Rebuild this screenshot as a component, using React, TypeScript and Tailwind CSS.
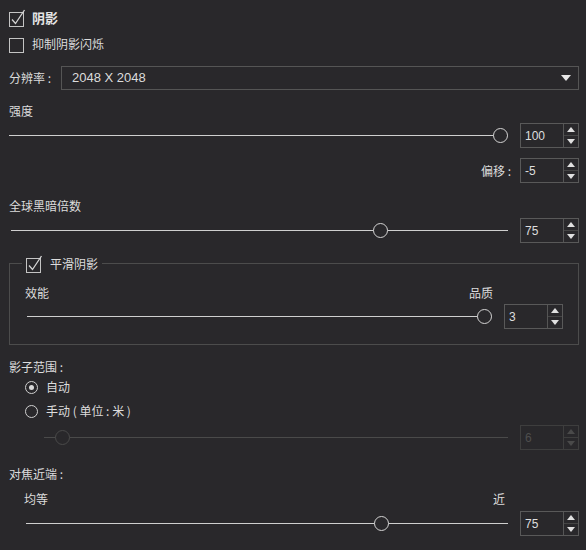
import React from 'react';

const cjk = "font-['Noto_Sans_CJK_SC','Noto_Sans',sans-serif]";
const num = "font-['Liberation_Sans',Arial,sans-serif]";

function CheckBox({ checked }: { checked: boolean }) {
  return (
    <svg width="17" height="18" viewBox="0 0 17 18" className="shrink-0">
      <rect x="0.5" y="3.5" width="14" height="14" fill="none" stroke="#c4c4c4" strokeWidth="1" />
      {checked && <path d="M3 10.5 L6.5 14.5 L15.5 1" fill="none" stroke="#d4d4d4" strokeWidth="1.3" />}
    </svg>
  );
}

function Radio({ checked }: { checked: boolean }) {
  return (
    <span className="relative flex h-[13px] w-[13px] shrink-0 items-center justify-center rounded-full border-[1.5px] border-[#d0d0d0]">
      {checked && <span className="h-[5px] w-[5px] rounded-full bg-[#d8d8d8]" />}
    </span>
  );
}

function Arrows({ dim }: { dim?: boolean }) {
  const c = dim ? '#4a4a4a' : '#e0e0e0';
  return (
    <div className={`flex w-[15px] flex-col border-l ${dim ? 'border-[#3e3e3e]' : 'border-[#555]'}`}>
      <div className={`flex flex-1 items-center justify-center border-b ${dim ? 'border-[#3e3e3e]' : 'border-[#454545]'}`}>
        <svg width="8" height="5" viewBox="0 0 8 5"><path d="M0 5 L4 0 L8 5Z" fill={c} /></svg>
      </div>
      <div className="flex flex-1 items-center justify-center">
        <svg width="8" height="5" viewBox="0 0 8 5"><path d="M0 0 L8 0 L4 5Z" fill={c} /></svg>
      </div>
    </div>
  );
}

function SpinBox({ value, dim }: { value: string; dim?: boolean }) {
  return (
    <div className={`flex h-[25px] w-[59px] shrink-0 border ${dim ? 'border-[#3e3e3e] text-[#4e4e4e]' : 'border-[#595959] text-[#dedede]'}`}>
      <div className={`flex flex-1 items-center pl-[4px] text-[12px] ${num}`}>{value}</div>
      <Arrows dim={dim} />
    </div>
  );
}

function Track({ pos, dim }: { pos: number; dim?: boolean }) {
  const line = dim ? 'bg-[#4a4a4a]' : 'bg-[#cfcfcf]';
  return (
    <div className="relative h-[16px] flex-1">
      <div className={`absolute left-0 right-0 top-[7px] h-[1.5px] ${line}`} />
      <div
        className={`absolute top-[0.5px] h-[15px] w-[15px] rounded-full border-[1.5px] bg-[#29282b] ${dim ? 'border-[#4a4a4a]' : 'border-[#d4d4d4]'}`}
        style={{ left: `calc(${pos} * (100% - 15px))` }}
      />
    </div>
  );
}

function SliderRow({ pos, value, dim, gap, padL }: { pos: number; value: string; dim?: boolean; gap: string; padL: string }) {
  return (
    <div className={`flex h-[25px] items-center ${gap} ${padL}`}>
      <Track pos={pos} dim={dim} />
      <SpinBox value={value} dim={dim} />
    </div>
  );
}

export default function App() {
  return (
    <div className={`h-[550px] w-[586px] overflow-hidden bg-[#29282b] pl-[9px] pr-[7px] pt-[9px] text-[12px] text-[#dcdcdc] ${cjk}`}>
      <div className="flex h-[18px] items-center gap-[6px]">
        <CheckBox checked />
        <span className="text-[13px] font-bold text-[#e4e4e4]">阴影</span>
      </div>

      <div className="mt-[8px] flex h-[18px] items-center gap-[6px]">
        <CheckBox checked={false} />
        <span>抑制阴影闪烁</span>
      </div>

      <div className="mt-[13px] flex h-[24px] items-center">
        <span className="w-[52px]">分辨率 :</span>
        <div className="flex h-[24px] flex-1 items-center justify-between border border-[#555] pl-[10px] pr-[7px]">
          <span className={`text-[13px] ${num}`}>2048 X 2048</span>
          <svg width="10" height="6" viewBox="0 0 10 6"><path d="M0 0 L10 0 L5 6Z" fill="#e8e8e8" /></svg>
        </div>
      </div>

      <div className="mt-[13px] flex h-[16px] items-center">强度</div>
      <div className="mt-[4px]">
        <SliderRow pos={1} value="100" gap="gap-[12px]" padL="pl-0" />
      </div>

      <div className="mt-[10px] flex h-[25px] items-center justify-end gap-[9px]">
        <span>偏移 :</span>
        <SpinBox value="-5" />
      </div>

      <div className="mt-[15px] flex h-[16px] items-center">全球黑暗倍数</div>
      <div className="mt-[4px]">
        <SliderRow pos={0.75} value="75" gap="gap-[12px]" padL="pl-[2px]" />
      </div>

      <div className="relative mt-[20px] h-[82px] border border-[#4c4c4c]">
        <div className="absolute left-[12px] top-[-9px] flex items-center gap-[7px] bg-[#29282b] px-[4px]">
          <CheckBox checked />
          <span>平滑阴影</span>
        </div>
        <div className="mt-[21px] flex h-[16px] items-center justify-between pl-[15px] pr-[85px]">
          <span>效能</span>
          <span>品质</span>
        </div>
        <div className="mt-[3px] pr-[15px]">
          <SliderRow pos={1} value="3" gap="gap-[12px]" padL="pl-[17px]" />
        </div>
      </div>

      <div className="mt-[14px] flex h-[16px] items-center">影子范围 :</div>
      <div className="mt-[4px] flex h-[16px] items-center gap-[8px] pl-[16px]">
        <Radio checked />
        <span>自动</span>
      </div>
      <div className="mt-[8px] flex h-[16px] items-center gap-[8px] pl-[16px]">
        <Radio checked={false} />
        <span>手动 ( 单位 : 米 )</span>
      </div>
      <div className="mt-[6px]">
        <SliderRow pos={0.024} value="6" dim gap="gap-[12px]" padL="pl-[35px]" />
      </div>

      <div className="mt-[16px] flex h-[16px] items-center">对焦近端 :</div>
      <div className="mt-[9px] flex h-[16px] items-center justify-between pl-[15px] pr-[74px]">
        <span>均等</span>
        <span>近</span>
      </div>
      <div className="mt-[4px]">
        <SliderRow pos={0.746} value="75" gap="gap-[12px]" padL="pl-[17px]" />
      </div>
    </div>
  );
}
